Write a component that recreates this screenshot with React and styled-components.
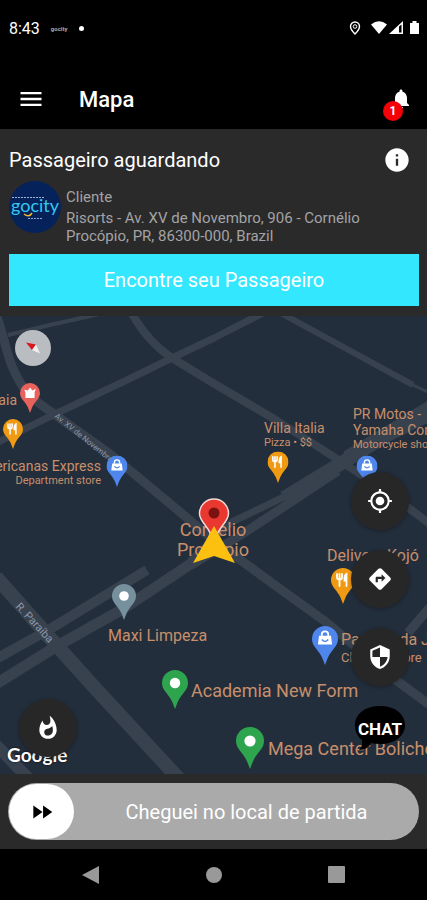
import React from 'react';
import styled, { createGlobalStyle } from 'styled-components';
import {
    MdMenu,
    MdNotifications,
    MdInfo,
    MdMyLocation,
    MdDirections,
    MdSecurity,
    MdWhatshot,
    MdFastForward,
} from 'react-icons/md';

const pinColors = {
    red: '#e8625c',
    orange: '#f09a13',
    blue: '#4f86ec',
    green: '#2ea44f',
    gray: '#76909d',
};

const places = [
    { x: 30, y: 97, size: 20, color: 'red', icon: 'pot' },
    { x: 13, y: 133, size: 20, color: 'orange', icon: 'fork' },
    { x: 117, y: 171, size: 21, color: 'blue', icon: 'bag' },
    { x: 278, y: 167, size: 21, color: 'orange', icon: 'fork' },
    { x: 367, y: 171, size: 21, color: 'blue', icon: 'bag' },
    { x: 124, y: 304, size: 24, color: 'gray', icon: 'dot' },
    { x: 343, y: 288, size: 24, color: 'orange', icon: 'fork' },
    { x: 325, y: 349, size: 26, color: 'blue', icon: 'bag' },
    { x: 175, y: 393, size: 26, color: 'green', icon: 'dot' },
    { x: 250, y: 453, size: 28, color: 'green', icon: 'dot' },
];

const labels = [
    { x: 17, y: 76, anchor: 'end', lines: ['Praia'] },
    { x: 101, y: 142, anchor: 'end', lines: ['Americanas Express'], sub: 'Department store' },
    { x: 264, y: 104, lines: ['Villa Italia'], sub: 'Pizza • $$' },
    { x: 353, y: 90, lines: ['PR Motos -', 'Yamaha Cornélio'], sub: 'Motorcycle shop' },
    { x: 213, y: 204, anchor: 'middle', size: 18, lines: ['Cornélio', 'Procópio'] },
    { x: 108, y: 311, size: 16, lines: ['Maxi Limpeza'] },
    { x: 327, y: 231, size: 16, lines: ['Delivery Kojó'] },
    { x: 341, y: 315, size: 16, lines: ['Padaria da Ju'], sub: 'Clothing store' },
    { x: 191, y: 365, size: 18, lines: ['Academia New Form'] },
    { x: 268, y: 423, size: 18, lines: ['Mega Center Boliche'] },
];

const PinIcon = ({ icon }) => {
    if (icon === 'dot') return <circle cx="12" cy="12" r="4.8" fill="#fff" />;
    if (icon === 'fork') {
        return (
            <g fill="none" stroke="#fff" strokeWidth="1.800" strokeLinecap="round">
                <path d="M6 6v3.500q0 2 2.500 2t2.500-2V6M8.500 6v12" />
                <path d="M15.500 18V6q-2 1-2 4.500v2h2" fill="#fff" />
            </g>
        );
    }
    if (icon === 'bag') {
        return (
            <g>
                <path d="M9 9.500V8a3 3 0 0 1 6 0v1.500" fill="none" stroke="#fff" strokeWidth="1.600" />
                <path d="M6.500 9h11l1 8h-13z" fill="#fff" />
                <path d="M9 12.500q3 3.500 6 0" fill="none" stroke="#4f86ec" strokeWidth="1.400" />
            </g>
        );
    }
    return <path d="M5 8l4.500 1L12 5.500l3 3.500 4-2-1.500 4.500V18h-11v-7z" fill="#fff" />;
};

const Pin = ({ place }) => (
    <PinMark $x={place.x} $y={place.y}>
        <svg width={place.size} height={place.size * 1.5} viewBox="0 0 24 36" aria-hidden="true">
            <path
                d="M12 0A12 12 0 0 0 0 12c0 7 6 9.500 9.500 17.500L12 36l2.500-6.500C18 21.500 24 19 24 12A12 12 0 0 0 12 0z"
                fill={pinColors[place.color]}
            />
            <PinIcon icon={place.icon} />
        </svg>
    </PinMark>
);

const Roads = () => (
    <RoadsSvg viewBox="0 0 427 458" preserveAspectRatio="xMidYMid slice" aria-hidden="true">
        <g fill="none" stroke="#38424f" strokeLinejoin="round">
            <path d="M-4 -2C4 20 6 36 12 50S24 76 40 88L110 138L150 171L192 206L213 224" strokeWidth="9" />
            <path d="M213 224L276 270L326 306L393 362L430 389" strokeWidth="9" />
            <path d="M-4 127L53 99L127 64L172 42L214 22L265 -4" strokeWidth="7" />
            <path d="M131 -4C142 16 154 30 172 42L213 67L276 104L320 132L360 158L410 193L430 208" strokeWidth="8" />
            <path d="M8 19L50 9L104 -3" strokeWidth="4" />
            <path d="M279 -4L413 69" strokeWidth="6" />
            <path d="M413 69L430 77" strokeWidth="3" />
            <path d="M-4 343L50 313L147 254" strokeWidth="10" />
            <path d="M-4 368L57 330L123 293L192 247" strokeWidth="11" />
            <path d="M190 245L232 206L290 178L338 147" strokeWidth="7" />
            <path d="M190 250L244 217L338 155" strokeWidth="9" />
            <path d="M284 182L340 148L385 120L430 98" strokeWidth="14" />
            <path d="M345 138L430 87" strokeWidth="6" />
            <path d="M-4 261L50 322L95 372L180 464" strokeWidth="14" />
            <path d="M-4 429L30 464" strokeWidth="12" />
            <path d="M408 317L430 291" strokeWidth="9" />
        </g>
        <g fill="#8b95a4" fontFamily="Roboto, sans-serif">
            <text fontSize="8" transform="translate(54 101) rotate(39)">Av. XV de Novembro</text>
            <text fontSize="11" transform="translate(15 291) rotate(47)">R. Paraíba</text>
        </g>
    </RoadsSvg>
);

const App = () => {
    return (
        <>
            <GlobalStyle />
            <Screen>
                <StatusBar>
                    <Clock>8:43</Clock>
                    <Carrier>gocity</Carrier>
                    <Dot />
                    <StatusIcons viewBox="0 0 72 16" aria-hidden="true">
                        <path d="M7 2a4.500 4.500 0 0 0-4.500 4.500C2.500 9.500 7 14 7 14s4.500-4.500 4.500-7.500A4.500 4.500 0 0 0 7 2z" fill="none" stroke="#fff" strokeWidth="1.400" />
                        <circle cx="7" cy="6.500" r="1.800" fill="none" stroke="#fff" />
                        <path d="M23 4.500Q31 -2 39 4.500L31 14z" fill="#fff" />
                        <path d="M55 1v13H41z" fill="#fff" />
                        <path d="M51 6.500l2.500-2V12.500H51z" fill="#000" />
                        <path d="M62 3h2.500V1h4v2H71v11h-9z" fill="#fff" />
                    </StatusIcons>
                </StatusBar>
                <Header>
                    <IconButton aria-label="Menu"><MdMenu size={28} /></IconButton>
                    <Title>Mapa</Title>
                    <IconButton aria-label="Notificações">
                        <MdNotifications size={24} />
                        <Badge>1</Badge>
                    </IconButton>
                </Header>
                <Passenger>
                    <PassengerTop>
                        <Heading>Passageiro aguardando</Heading>
                        <IconButton aria-label="Informações"><MdInfo size={28} /></IconButton>
                    </PassengerTop>
                    <Client>
                        <Avatar viewBox="0 0 52 52" aria-hidden="true">
                            <circle cx="26" cy="26" r="26" fill="#06225a" />
                            <path d="M3 16.500h32" stroke="#9cb4d8" strokeDasharray="2 1" />
                            <text x="26" y="31" textAnchor="middle" fontFamily="Lato, sans-serif" fontSize="18" fill="#35c8ee">gocity</text>
                            <path d="M15 33q5 4 8-1" fill="none" stroke="#f4b92e" strokeWidth="1.500" />
                            <path d="M19 37.500h14" stroke="#8fa7cf" strokeDasharray="2 1" />
                        </Avatar>
                        <ClientText>
                            <ClientName>Cliente</ClientName>
                            <Address>Risorts - Av. XV de Novembro, 906 - Cornélio Procópio, PR, 86300-000, Brazil</Address>
                        </ClientText>
                    </Client>
                    <FindButton>Encontre seu Passageiro</FindButton>
                </Passenger>
                <Map>
                    <Roads />
                    {labels.map((label) => (
                        <Label key={label.lines[0]} $x={label.x} $y={label.y} $anchor={label.anchor} $size={label.size}>
                            {label.lines.map((line) => <span key={line}>{line}</span>)}
                            {label.sub && <SubLabel $big={label.size > 14}>{label.sub}</SubLabel>}
                        </Label>
                    ))}
                    {places.map((place) => <Pin key={`${place.x}-${place.y}`} place={place} />)}
                    <PinMark $x={214} $y={228}>
                        <svg width="32" height="46" viewBox="0 0 32 46" aria-hidden="true">
                            <path d="M16 1A14.500 14.500 0 0 0 1.500 15.500C1.500 25 13 29 16 45 19 29 30.500 25 30.500 15.500A14.500 14.500 0 0 0 16 1z" fill="#e8382f" stroke="#f3d9d7" strokeWidth="1.500" />
                            <circle cx="16" cy="15" r="5.500" fill="#7a1212" />
                        </svg>
                    </PinMark>
                    <PinMark $x={214} $y={248}>
                        <svg width="42" height="38" viewBox="0 0 42 38" aria-hidden="true">
                            <path d="M21 0L42 37L21 30L0 37z" fill="#fbc010" />
                        </svg>
                    </PinMark>
                    <Compass aria-label="Bússola">
                        <svg width="36" height="36" viewBox="0 0 36 36" aria-hidden="true">
                            <path d="M11 12.500l10 2-4 5.500z" fill="#d8161c" />
                            <path d="M21 14.500l4 9-8-3.500z" fill="#eee" />
                        </svg>
                    </Compass>
                    <Google>Google</Google>
                    <HeatSlot>
                        <RoundButton aria-label="Mapa de calor"><MdWhatshot size={26} /></RoundButton>
                    </HeatSlot>
                    <Actions>
                        <RoundButton aria-label="Minha localização"><MdMyLocation size={26} /></RoundButton>
                        <RoundButton aria-label="Rotas"><MdDirections size={26} /></RoundButton>
                        <RoundButton aria-label="Segurança"><MdSecurity size={26} /></RoundButton>
                        <ChatButton>
                            <svg viewBox="0 0 52 46" aria-hidden="true">
                                <path d="M26 0C11 0 1 8 1 19c0 7 3 12 7 15q1 6-3 10 9 0 12-7 4 1 9 1c15 0 25-8 25-19S41 0 26 0z" />
                            </svg>
                            <span>CHAT</span>
                        </ChatButton>
                    </Actions>
                </Map>
                <SlideArea>
                    <Slider>
                        <Knob aria-label="Deslizar"><MdFastForward size={26} /></Knob>
                        <SliderText>Cheguei no local de partida</SliderText>
                    </Slider>
                </SlideArea>
                <NavBar>
                    <NavButton aria-label="Voltar">
                        <svg width="18" height="18"><path d="M17 0v18L0 9z" /></svg>
                    </NavButton>
                    <NavButton aria-label="Início">
                        <svg width="18" height="18"><circle cx="9" cy="9" r="8" /></svg>
                    </NavButton>
                    <NavButton aria-label="Recentes">
                        <svg width="18" height="18"><rect width="17" height="17" rx="1" /></svg>
                    </NavButton>
                </NavBar>
            </Screen>
        </>
    )
}

const GlobalStyle = createGlobalStyle`
    * {
        box-sizing: border-box;
    }
    body {
        margin: 0;
        background: #000;
        font-family: Roboto, sans-serif;
        color: #fff;
    }
    button {
        font-family: inherit;
        color: inherit;
        border: 0;
        padding: 0;
        background: none;
        cursor: pointer;
    }
    svg {
        display: block;
    }
`

const Screen = styled.main`
    display: flex;
    flex-direction: column;
    min-height: 100vh;
`

const StatusBar = styled.div`
    display: flex;
    align-items: center;
    height: 56px;
    padding: 0 7px 0 9px;
`

const Clock = styled.span`
    font-size: 16px;
`

const Carrier = styled.span`
    font-size: 6px;
    font-weight: 700;
    color: #aaa;
    margin-left: 11px;
`

const Dot = styled.span`
    width: 5px;
    height: 5px;
    border-radius: 50%;
    background: #fff;
    margin-left: 12px;
`

const StatusIcons = styled.svg`
    width: 72px;
    height: 16px;
    margin-left: auto;
`

const Header = styled.header`
    display: flex;
    align-items: center;
    height: 73px;
    padding: 12px 14px 0 17px;
`

const Title = styled.h1`
    flex: 1;
    font-size: 22px;
    font-weight: 500;
    line-height: 28px;
    margin: 2px 0 0 34px;
`

const IconButton = styled.button`
    position: relative;
    display: flex;
`

const Badge = styled.span`
    position: absolute;
    left: -6px;
    top: 14px;
    width: 20px;
    height: 20px;
    border-radius: 50%;
    background: #f40009;
    font-size: 12px;
    font-weight: 700;
    line-height: 20px;
    text-align: center;
`

const Passenger = styled.section`
    background: #2a2a2a;
    padding: 17px 8px 10px 9px;
`

const PassengerTop = styled.div`
    display: flex;
    align-items: center;
    justify-content: space-between;
    padding-right: 8px;
`

const Heading = styled.h2`
    font-size: 20px;
    font-weight: 400;
    line-height: 28px;
    margin: 0;
`

const Client = styled.div`
    display: flex;
    gap: 5px;
    margin-top: 7px;
`

const Avatar = styled.svg`
    flex: none;
    width: 52px;
    height: 52px;
`

const ClientText = styled.div`
    display: flex;
    flex-direction: column;
    gap: 3px;
    padding: 7px 24px 0 0;
    font-size: 15px;
    line-height: 18px;
    color: #a3a3a5;
`

const ClientName = styled.span``

const Address = styled.span``

const FindButton = styled.button`
    display: block;
    width: 100%;
    height: 52px;
    margin-top: 9px;
    background: #33e7ff;
    font-size: 20px;
`

const Map = styled.section`
    position: relative;
    flex: 1;
    min-height: 458px;
    overflow: hidden;
    background: #232e3c;
`

const RoadsSvg = styled.svg`
    position: absolute;
    width: 100%;
    height: 100%;
`

const PinMark = styled.div`
    position: absolute;
    left: ${(props) => props.$x}px;
    top: ${(props) => props.$y}px;
    transform: translate(-50%, -100%);
`

const anchors = { start: '0', middle: '-50%', end: '-100%' };

const Label = styled.div`
    position: absolute;
    left: ${(props) => props.$x}px;
    top: ${(props) => props.$y}px;
    transform: translateX(${(props) => anchors[props.$anchor || 'start']});
    display: flex;
    flex-direction: column;
    align-items: ${(props) => (props.$anchor === 'middle' ? 'center' : props.$anchor || 'start')};
    font-size: ${(props) => props.$size || 14}px;
    line-height: ${(props) => (props.$size || 14) + 2}px;
    color: #c88f6b;
    white-space: nowrap;
`

const SubLabel = styled.span`
    font-size: ${(props) => (props.$big ? 13 : 11)}px;
    line-height: ${(props) => (props.$big ? 18 : 14)}px;
`

const Compass = styled.button`
    position: absolute;
    left: 15px;
    top: 14px;
    width: 36px;
    height: 36px;
    border-radius: 50%;
    background: #b9bcc0;
`

const Google = styled.span`
    position: absolute;
    left: 7px;
    bottom: 8px;
    font-family: Lato, sans-serif;
    font-size: 19px;
    font-weight: 700;
    line-height: 22px;
    text-shadow: 0 0 2px #000;
`

const HeatSlot = styled.div`
    position: absolute;
    left: 19px;
    bottom: 17px;
`

const Actions = styled.div`
    position: absolute;
    right: 18px;
    top: 156px;
    display: flex;
    flex-direction: column;
    align-items: center;
    gap: 20px;
`

const RoundButton = styled.button`
    display: flex;
    align-items: center;
    justify-content: center;
    width: 58px;
    height: 58px;
    border-radius: 50%;
    background: #272727;
    box-shadow: 0 1px 4px rgba(0, 0, 0, 0.3);
`

const ChatButton = styled.button`
    position: relative;
    width: 52px;
    height: 46px;
    font-size: 17px;
    font-weight: 700;

    svg {
        position: absolute;
        inset: 0;
    }
    span {
        position: relative;
        display: block;
        line-height: 42px;
    }
`

const SlideArea = styled.section`
    background: #2a2a2a;
    padding: 9px 8px;
`

const Slider = styled.div`
    display: flex;
    align-items: center;
    height: 57px;
    border-radius: 29px;
    background: #aaa;
`

const Knob = styled.button`
    display: flex;
    align-items: center;
    justify-content: center;
    width: 65px;
    height: 55px;
    margin-left: 1px;
    border-radius: 28px;
    background: #fff;
    color: #000;
`

const SliderText = styled.span`
    flex: 1;
    font-size: 20px;
    text-align: center;
`

const NavBar = styled.nav`
    display: flex;
    align-items: center;
    justify-content: center;
    gap: 105px;
    height: 51px;
`

const NavButton = styled.button`
    fill: #999;
`

export default App
